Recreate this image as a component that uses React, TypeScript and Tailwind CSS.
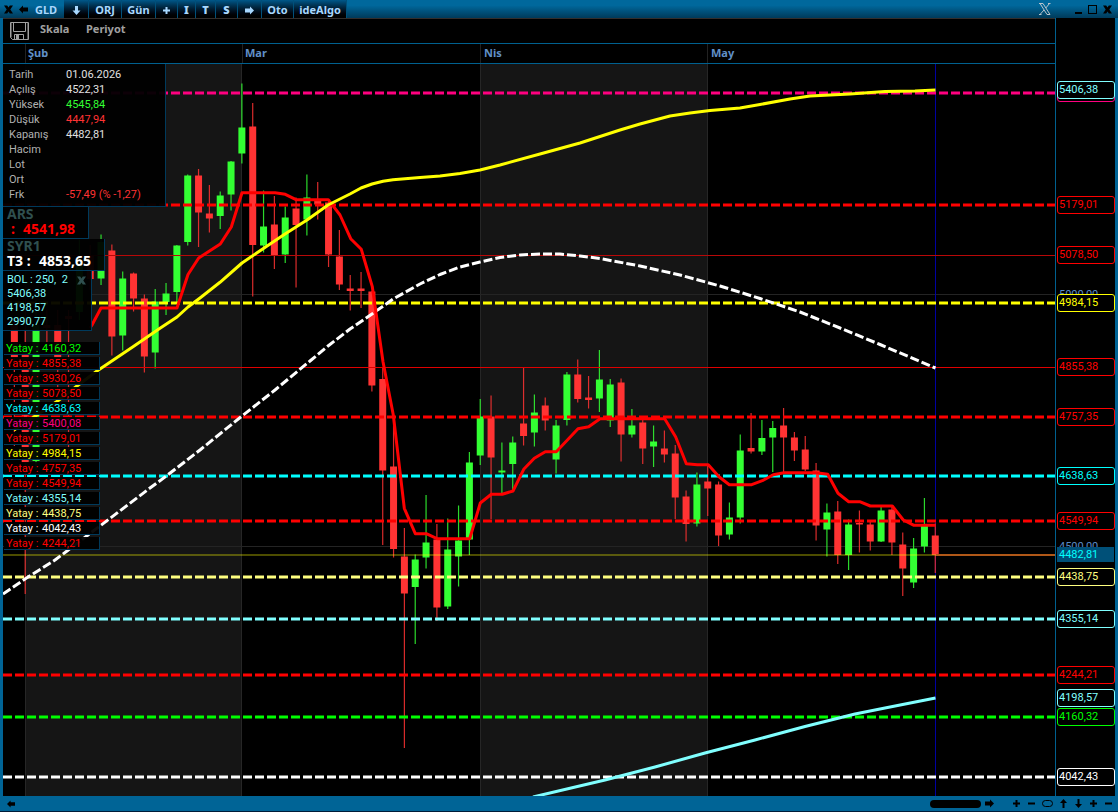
import type { ReactNode } from "react";

type Candle = [index: number, high: number, top: number, bottom: number, low: number, up: 0 | 1];

// candle index -> x, month of February starts at index 0
const xAt = (i: number) => 25.2 + i * 10.834;

const candles: Candle[] = [
  [-1, 320, 325, 358, 446, 0],
  [0, 300, 352, 463, 594, 0],
  [1, 300, 325, 461, 470, 1],
  [2, 310, 325, 328, 344, 0],
  [3, 310, 325, 358, 402, 0],
  [4, 310, 316, 319, 460, 0],
  [5, 240, 262, 312, 320, 1],
  [6, 245, 255, 279, 290, 0],
  [7, 234.5, 242, 278.5, 285, 1],
  [8, 244.5, 250.5, 336.5, 355.5, 0],
  [9, 271.5, 278.5, 335.5, 350.5, 1],
  [10, 272.5, 273.5, 298.5, 311.5, 0],
  [11, 294.5, 298.5, 356.5, 372.5, 0],
  [12, 289, 301.5, 352.5, 368.5, 1],
  [13, 283, 293.5, 302, 315, 1],
  [14, 245, 245.5, 292, 302, 1],
  [15, 174.5, 175.5, 242, 245.5, 1],
  [16, 169, 175.5, 212.5, 247, 0],
  [17, 185, 213.5, 218.5, 232.5, 0],
  [18, 191.5, 195.5, 216, 229, 1],
  [19, 161, 161.5, 194.5, 210.5, 1],
  [20, 83.5, 127.5, 153.5, 163.5, 1],
  [21, 103, 126.5, 245, 296.5, 0],
  [22, 190.5, 226.5, 245.5, 252.5, 1],
  [23, 196, 224.5, 255, 269, 0],
  [24, 206.5, 217.5, 254.5, 263, 1],
  [25, 197.5, 208.5, 225, 287.5, 0],
  [26, 174.5, 197.5, 219.5, 235.5, 1],
  [27, 182, 201, 204.5, 219.5, 0],
  [28, 202, 202.5, 254.5, 267, 0],
  [29, 230, 256.5, 284.5, 290, 0],
  [30, 275, 288.5, 291, 310.5, 0],
  [31, 272, 288.5, 291, 308, 0],
  [32, 291, 291.5, 385.5, 391.5, 0],
  [33, 367, 379, 470.5, 545, 0],
  [34, 420, 466.5, 549, 557.5, 0],
  [35, 528, 556.5, 593.5, 748, 0],
  [36, 554.5, 559.5, 587, 644, 1],
  [37, 495, 542.5, 557.5, 568.5, 1],
  [38, 524, 539.5, 607.5, 621, 0],
  [39, 518.5, 549.5, 606.5, 609, 1],
  [40, 505.5, 540.5, 556.5, 586.5, 1],
  [41, 452, 462.5, 539.5, 555, 1],
  [42, 399, 416.5, 455.5, 465, 1],
  [43, 395.5, 416.5, 457.5, 519, 0],
  [44, 442.5, 470.5, 472.5, 493.5, 1],
  [45, 436.5, 442.5, 464, 490, 1],
  [46, 367.5, 423.5, 436, 445.5, 0],
  [47, 394.5, 412.5, 432.5, 446.5, 1],
  [48, 397.5, 405.5, 420.5, 430.5, 0],
  [49, 420, 425.5, 459.5, 473.5, 1],
  [50, 372, 374.5, 420, 425.5, 1],
  [51, 359.5, 374.5, 399, 402.5, 0],
  [52, 376, 397.5, 400, 408.5, 0],
  [53, 350, 379.5, 398.5, 412, 1],
  [54, 379, 384.5, 420.5, 427, 1],
  [55, 378.5, 382.5, 434.5, 461.5, 0],
  [56, 409, 425.5, 434.5, 437.5, 1],
  [57, 419.5, 422.5, 448.5, 464, 0],
  [58, 425.5, 441.5, 446.5, 467, 1],
  [59, 430.5, 448.5, 454.5, 462.5, 0],
  [60, 445, 453.5, 497.5, 519, 0],
  [61, 490.5, 496.5, 524, 541.5, 0],
  [62, 472.5, 484.5, 523.5, 526.5, 1],
  [63, 466, 481.5, 488.5, 516, 0],
  [64, 481.5, 484.5, 535.5, 546, 0],
  [65, 502.5, 517.5, 534.5, 539.5, 1],
  [66, 434.5, 450.5, 517.5, 523.5, 1],
  [67, 413, 448, 451.5, 453.5, 0],
  [68, 420, 438, 451.5, 455, 1],
  [69, 421, 428, 437.5, 472, 1],
  [70, 408, 425.5, 437.5, 473.5, 0],
  [71, 432, 437.5, 450.5, 461, 0],
  [72, 436, 449.5, 469.5, 471, 0],
  [73, 463, 470.5, 525.5, 540.5, 0],
  [74, 503.5, 512.5, 529.5, 556.5, 1],
  [75, 501, 511.5, 555, 564, 0],
  [76, 519.5, 524.5, 555, 570, 1],
  [77, 510.5, 523, 524.5, 552.5, 0],
  [78, 521, 524.5, 541.5, 550.5, 0],
  [79, 506.5, 510.5, 541.5, 542, 1],
  [80, 505, 509.5, 542.5, 555, 0],
  [81, 532.5, 544.5, 568.5, 596, 0],
  [82, 538, 548.5, 582.5, 588, 1],
  [83, 498, 526, 546.5, 552.5, 1],
  [84, 523.5, 535.5, 555, 573, 0],
];

const arsLine =
  "90,328 92,325 101,308 177,308 188,274.5 198.7,258 220.3,244 231.3,227 242,192.7 275,192.7 285.3,194.3 296,199.7 328.3,199.7 340,215 350.7,238.7 361.3,249.3 372.3,286.7 383,361.7 393.3,415 404.3,508.3 415.3,533.7 426.3,533.7 437,538.7 469.7,538.7 480.3,503 491.3,494.3 502.3,494.3 513,491 523.7,469.3 534.3,458.3 545.3,451.7 556.3,451.7 578,428.7 588.7,426.7 600,418.7 664.7,418.7 675.7,437 686.3,463.7 697.3,464.7 708.3,464.7 719,476.7 729.3,484.7 751.7,484.7 762.3,480.7 773.3,474.7 784,472.7 816.3,472.7 827.7,474.3 838,493.3 848.7,501.7 859.7,501.7 870.3,506 892.3,506 903.3,520 914,525.3 935.5,525.3";

const upperBand =
  "14,430 37,415 58,400.7 77,386 97,371 133,346.7 160,328.3 177,317 188,307 200,298 220,282.3 242,263 263,248.7 285,234 307,220 328,205 350,194 361,188 372,184 383,181.3 393,179.7 420,177.5 440,176 460,173.5 480,170 500,165 540,154 580,143 600,136.5 620,130 640,124 670,116 690,113 710,110.5 740,108 760,104.5 790,99 810,96 850,94 885,91.5 915,91 935.5,90";

const middleBand =
  "3,594 25,579 55,560 67,551 88,535 100,526 150,488 167,475.5 200,450 242,416 275,390 310,361 328,346 350,329 372,314 393,299 420,284 440,274.5 460,267 480,262 500,257.5 520,255 540,254 560,254 580,256 600,258.5 640,266 680,275 720,286 760,298.5 800,312 840,328 880,344.5 935.5,368";

const lowerBand = "533,797 605,780 655,767 705,753 755,740 805,726.5 855,714 885,708 935.5,698";

const dashedLevels = [
  { y: 93, color: "#ff0080" },
  { y: 205, color: "#ff0000" },
  { y: 303, color: "#ffff00" },
  { y: 417, color: "#ff0000" },
  { y: 476, color: "#00ffff" },
  { y: 521, color: "#ff0000" },
  { y: 577, color: "#ffff80" },
  { y: 619, color: "#80ffff" },
  { y: 675, color: "#ff0000" },
  { y: 717, color: "#00ff00" },
  { y: 777, color: "#ffffff" },
];

const axisTags = [
  { y: 93, text: "", cls: "border-[#ff0080] text-[#ff0080]" },
  { y: 90, text: "5406,38", cls: "border-[#80ffff] text-[#80ffff]" },
  { y: 205, text: "5179,01", cls: "border-[#ff0000] text-[#ff0000]" },
  { y: 255, text: "5078,50", cls: "border-[#ff0000] text-[#ff0000]" },
  { y: 303, text: "4984,15", cls: "border-[#ffff00] text-[#ffff00]" },
  { y: 367, text: "4855,38", cls: "border-[#ff0000] text-[#ff0000]" },
  { y: 417, text: "4757,35", cls: "border-[#ff0000] text-[#ff0000]" },
  { y: 476, text: "4638,63", cls: "border-[#00ffff] text-[#00ffff]" },
  { y: 521, text: "4549,94", cls: "border-[#ff0000] text-[#ff0000]" },
  { y: 577, text: "4438,75", cls: "border-[#ffff80] text-[#ffff80]" },
  { y: 619, text: "4355,14", cls: "border-[#80ffff] text-[#80ffff]" },
  { y: 675, text: "4244,21", cls: "border-[#ff0000] text-[#ff0000]" },
  { y: 698, text: "4198,57", cls: "border-[#80ffff] text-[#80ffff]" },
  { y: 717, text: "4160,32", cls: "border-[#00ff00] text-[#00ff00]" },
  { y: 777, text: "4042,43", cls: "border-[#ffffff] text-[#ffffff]" },
];

const infoRows = [
  { label: "Tarih", value: "01.06.2026", cls: "text-[#e0e0e0]" },
  { label: "Açılış", value: "4522,31", cls: "text-[#e0e0e0]" },
  { label: "Yüksek", value: "4545,84", cls: "text-[#33ff33]" },
  { label: "Düşük", value: "4447,94", cls: "text-[#ff3333]" },
  { label: "Kapanış", value: "4482,81", cls: "text-[#e0e0e0]" },
  { label: "Hacim", value: "", cls: "" },
  { label: "Lot", value: "", cls: "" },
  { label: "Ort", value: "", cls: "" },
  { label: "Frk", value: "-57,49 (% -1,27)", cls: "text-[#ff3333]" },
];

const yatay = [
  { value: "4160,32", cls: "text-[#00ff00]" },
  { value: "4855,38", cls: "text-[#ff0000]" },
  { value: "3930,26", cls: "text-[#ff0000]" },
  { value: "5078,50", cls: "text-[#ff0000]" },
  { value: "4638,63", cls: "text-[#00ffff]" },
  { value: "5400,08", cls: "text-[#ff0080]" },
  { value: "5179,01", cls: "text-[#ff0000]" },
  { value: "4984,15", cls: "text-[#ffff00]" },
  { value: "4757,35", cls: "text-[#ff0000]" },
  { value: "4549,94", cls: "text-[#ff0000]" },
  { value: "4355,14", cls: "text-[#80ffff]" },
  { value: "4438,75", cls: "text-[#ffff80]" },
  { value: "4042,43", cls: "text-[#ffffff]" },
  { value: "4244,21", cls: "text-[#ff0000]" },
];

const ARROW_LEFT = "M0 4.5 4 0.5V2.500H9V6.500H4V8.5Z";
const ARROW_RIGHT = "M9 4.5 5 0.5V2.500H0V6.500H5V8.5Z";
const ARROW_UP = "M4.5 0 8 4H5.5V9H3.5V4H1Z";
const ARROW_DOWN = "M4.5 9 8 5H5.5V0H3.5V5H1Z";
const ARROW_DOWN_BOLD = "M4.5 9 8.500 4.500H6V0H3V4.500H0.500Z";
const PLUS = "M3.5 1H5.5V3.5H8V5.5H5.5V8H3.5V5.5H1V3.5H3.5Z";
const MINUS = "M1 3.5H8V5.5H1Z";
const CROSS = "M0 0.500H3.200L4.5 2.500 5.800 .500H9L6.300 4.5 9 8.5H5.800L4.5 6.500 3.200 8.5H0L2.700 4.5Z";

function Glyph({ d, className = "size-[9px]" }: { d: string; className?: string }) {
  return (
    <svg viewBox="0 0 9 9" className={className} fill="currentColor" aria-hidden="true">
      <path d={d} />
    </svg>
  );
}

function BarButton({ className, label, children }: { className: string; label?: string; children: ReactNode }) {
  return (
    <button
      type="button"
      aria-label={label}
      className={`flex h-full items-center justify-center border-r border-[#00507a] bg-linear-to-b from-[#00588a] to-black pt-[2px] ${className}`}
    >
      {children}
    </button>
  );
}

function TitleBar() {
  return (
    <header className="flex h-[18px] shrink-0 items-center bg-linear-to-b from-[#00689c] from-30% to-[#003a5a] text-[11px] leading-4 font-bold text-[#a8d8ff]">
      <button type="button" aria-label="Kapat" className="ml-1 pt-px text-black">
        <Glyph d={CROSS} />
      </button>
      <button type="button" aria-label="Geri" className="ml-[6px] pt-px text-black">
        <Glyph d={ARROW_LEFT} />
      </button>
      <button type="button" className="ml-[7px] w-[29px] pt-[2px] text-left">GLD</button>
      <BarButton className="w-[25px]" label="Aşağı">
        <Glyph d={ARROW_DOWN_BOLD} />
      </BarButton>
      <BarButton className="w-[33px]">ORJ</BarButton>
      <BarButton className="w-[34px]">Gün</BarButton>
      <BarButton className="w-[22px]" label="Ekle">
        <Glyph d={PLUS} />
      </BarButton>
      <BarButton className="w-[18px] font-black">I</BarButton>
      <BarButton className="w-5 font-black">T</BarButton>
      <BarButton className="w-[22px] font-black">S</BarButton>
      <BarButton className="w-6" label="İleri">
        <Glyph d={ARROW_RIGHT} />
      </BarButton>
      <BarButton className="w-8">Oto</BarButton>
      <BarButton className="w-[53px]">ideAlgo</BarButton>
      <div className="ml-auto flex items-center pr-[6px] text-black">
        <button type="button" aria-label="X" className="mr-6">
          <svg viewBox="0 0 12 12" className="size-3" fill="none" stroke="#b8c4cc" aria-hidden="true">
            <path d="M1 0.5H4L11 11.5H8Z" />
            <path d="M10.500.5 6.8 5M5 7 1 11.5M0 .5H2M9 .5H11.500M0 11.500H2.500" />
          </svg>
        </button>
        <button type="button" aria-label="Küçült" className="mr-[6px] flex h-[10px] w-[7px] items-end">
          <span className="h-[2px] w-full bg-black" />
        </button>
        <button type="button" aria-label="Büyüt" className="mr-[6px] h-[9px] w-[9px] border border-black" />
        <button type="button" aria-label="Pencereyi kapat">
          <Glyph d={CROSS} />
        </button>
      </div>
    </header>
  );
}

function SaveIcon() {
  return (
    <svg viewBox="0 0 19 18" className="h-[18px] w-[19px]" fill="none" stroke="#a0a0a0" aria-hidden="true">
      <path d="M0.500 0.500H18.500V17.500H2.500L0.500 15.500Z" />
      <path d="M3.500 0.500V9.500H15.500V0.500" />
      <path d="M4.500 17.500V12.500H13.500V17.500" />
      <path d="M6 13H9V17H6Z" fill="#a0a0a0" stroke="none" />
      <path d="M1.500 1V15.500M17.500 1V17" opacity="0.500" />
    </svg>
  );
}

function Plot() {
  return (
    <svg className="absolute inset-0 h-full w-full" role="img" aria-label="GLD günlük mum grafiği">
      <g transform="translate(-3 -64)">
        <rect x="25" y="64" width="217" height="100%" fill="#151515" />
        <rect x="480" y="64" width="227" height="100%" fill="#151515" />
        {[25, 241, 480, 707].map((x) => (
          <rect key={x} x={x} y="64" width="1" height="110%" fill="#262626" />
        ))}
        <rect x="3" y="294" width="100%" height="1" fill="#242424" />
        <rect x="3" y="546" width="100%" height="1" fill="#242424" />
        <rect x="935" y="64" width="1" height="110%" fill="#0000a0" />

        {candles.map(([i, high, top, bottom, low, up]) => {
          const x = xAt(i);
          const fill = up ? "#33ff33" : "#ff3333";
          return (
            <g key={i} fill={fill}>
              <rect x={x - 0.6} y={high} width="1.2" height={low - high} opacity="0.85" />
              <rect x={x - 3.5} y={top} width="7" height={bottom - top} />
            </g>
          );
        })}

        <rect x="3" y="255" width="110%" height="1" fill="#b80808" />
        <rect x="3" y="367" width="110%" height="1" fill="#e00000" />
        <rect x="3" y="554" width="933" height="2" fill="#ffff00" opacity="0.3" />
        <rect x="936" y="554" width="100%" height="2" fill="#b05818" />

        {dashedLevels.map((l) => (
          <line key={l.y} x1="3" x2="110%" y1={l.y} y2={l.y} stroke={l.color} strokeWidth="3" strokeDasharray="9 3" />
        ))}

        <g fill="none" strokeWidth="3" strokeLinejoin="round">
          <polyline points={lowerBand} stroke="#80ffff" />
          <polyline points={middleBand} stroke="#ffffff" strokeDasharray="9 3" />
          <polyline points={arsLine} stroke="#ff0000" />
          <polyline points={upperBand} stroke="#ffff00" />
        </g>
      </g>
    </svg>
  );
}

function Panel({ className, children }: { className: string; children: ReactNode }) {
  return <section className={`border-r border-b border-[#003a5c] bg-black/95 ${className}`}>{children}</section>;
}

function Overlays() {
  return (
    <div className="absolute top-0 left-0">
      <Panel className="w-[163px] pt-[3px] pb-1 pl-[6px]">
        <dl>
          {infoRows.map((r) => (
            <div key={r.label} className="flex h-[15px] leading-[15px]">
              <dt className="w-[57px] text-[#b0b0b0]">{r.label}</dt>
              <dd className={r.cls}>{r.value}</dd>
            </div>
          ))}
        </dl>
      </Panel>
      <Panel className="h-8 w-[86px] pl-1 font-[Noto_Sans] text-[14px] font-bold">
        <h2 className="leading-[13px] text-[#2f4f4f]">ARS</h2>
        <p className="flex gap-2 pl-1 leading-[17px] text-[#ff0000]">
          <span>:</span>
          <span>4541,98</span>
        </p>
      </Panel>
      <Panel className="h-8 w-[102px] pl-1 font-[Noto_Sans] text-[14px] font-bold">
        <h2 className="leading-[13px] text-[#2f4f4f]">SYR1</h2>
        <p className="flex leading-[17px] text-white">
          <span className="w-8">T3 :</span>
          <span>4853,65</span>
        </p>
      </Panel>
      <Panel className="w-[89px] pt-[2px] pb-px pl-1 leading-[14px] text-[#80ffff]">
        <div className="flex items-center justify-between pr-[5px]">
          <span>BOL : 250,&nbsp; 2</span>
          <button type="button" aria-label="BOL kaldır" className="text-[#2f4f4f]">
            <Glyph d={CROSS} />
          </button>
        </div>
        <p>5406,38</p>
        <p>4198,57</p>
        <p>2990,77</p>
      </Panel>
      <ul className="mt-[11px] flex flex-col gap-[2px]">
        {yatay.map((y) => (
          <li
            key={y.value}
            className={`ml-px flex h-[13px] w-24 border-r border-b border-[#003a5c] bg-black/95 pl-[2px] leading-[13px] ${y.cls}`}
          >
            <span className="w-9">Yatay :</span>
            <span>{y.value}</span>
          </li>
        ))}
      </ul>
    </div>
  );
}

function PriceAxis() {
  return (
    <aside className="relative w-[60px] shrink-0 border-l border-[#00608f] text-[11px] leading-4">
      <span className="absolute top-[269px] left-[3px] text-[#5a8cc8]">5000,00</span>
      <span className="absolute top-[521px] left-[3px] text-[#5a8cc8]">4500,00</span>
      {axisTags.map((t) => (
        <div
          key={t.y}
          className={`absolute right-0 left-px h-[18px] rounded-[3px] border bg-black pl-px leading-4 ${t.cls}`}
          style={{ top: t.y - 27 }}
        >
          {t.text}
        </div>
      ))}
      <div className="absolute top-[529px] right-px left-px h-[15px] bg-[#005078] pl-[2px] leading-[15px] text-[#00ffff]">
        4482,81
      </div>
    </aside>
  );
}

function BottomBar() {
  return (
    <footer className="flex h-4 shrink-0 items-center border-b border-[#001c38] bg-[#006496] pr-[5px] text-black">
      <button type="button" aria-label="Sola kaydır" className="ml-[7px]">
        <Glyph d={ARROW_LEFT} className="size-2" />
      </button>
      <div className="mr-1 ml-auto h-2 w-[51px] rounded-full bg-black" />
      <button type="button" aria-label="Sağa kaydır" className="mr-[18px]">
        <Glyph d={ARROW_RIGHT} />
      </button>
      <div className="flex items-center gap-[6px]">
        <button type="button" aria-label="Yatay büyüt"><Glyph d={PLUS} /></button>
        <button type="button" aria-label="Yatay küçült"><Glyph d={MINUS} /></button>
        <button type="button" aria-label="Sıfırla" className="h-[7px] w-[11px] rounded-full border border-black" />
        <button type="button" aria-label="Yukarı"><Glyph d={ARROW_UP} /></button>
        <button type="button" aria-label="Aşağı kaydır"><Glyph d={ARROW_DOWN} /></button>
        <button type="button" aria-label="Dikey büyüt"><Glyph d={PLUS} /></button>
        <button type="button" aria-label="Dikey küçült"><Glyph d={MINUS} /></button>
      </div>
    </footer>
  );
}

export default function App() {
  return (
    <div className="flex h-screen flex-col bg-black font-[Noto_Sans,sans-serif]">
      <TitleBar />
      <main className="flex min-h-0 flex-1 border-r-3 border-l-3 border-[#006496] font-[Roboto,sans-serif]">
        <div className="flex min-w-0 flex-1 flex-col">
          <nav className="flex h-[26px] shrink-0 items-start border-t border-b border-t-[#332e2c] border-b-[#00608f] pl-[7px] font-[Noto_Sans] text-[11px] leading-4 font-bold text-[#a0a0a0]">
            <button type="button" aria-label="Kaydet" className="mt-[3px]">
              <SaveIcon />
            </button>
            <button type="button" className="mt-[2px] ml-[11px] w-[46px] text-left">Skala</button>
            <button type="button" className="mt-[2px]">Periyot</button>
          </nav>
          <div className="flex h-5 shrink-0 border-b border-[#00608f] pl-[22px] font-[Noto_Sans] text-[11px] leading-[17px] font-bold text-[#6090c8]">
            <span className="w-[217px] border-l border-[#222222] pl-[2px]">Şub</span>
            <span className="w-[238px] border-l border-[#222222] pl-[2px]">Mar</span>
            <span className="w-[227px] border-l border-[#222222] pl-[3px]">Nis</span>
            <span className="flex-1 border-l border-[#222222] pl-[3px]">May</span>
          </div>
          <div className="relative min-h-0 flex-1 overflow-hidden text-[11px]">
            <Plot />
            <Overlays />
          </div>
        </div>
        <PriceAxis />
      </main>
      <BottomBar />
    </div>
  );
}
